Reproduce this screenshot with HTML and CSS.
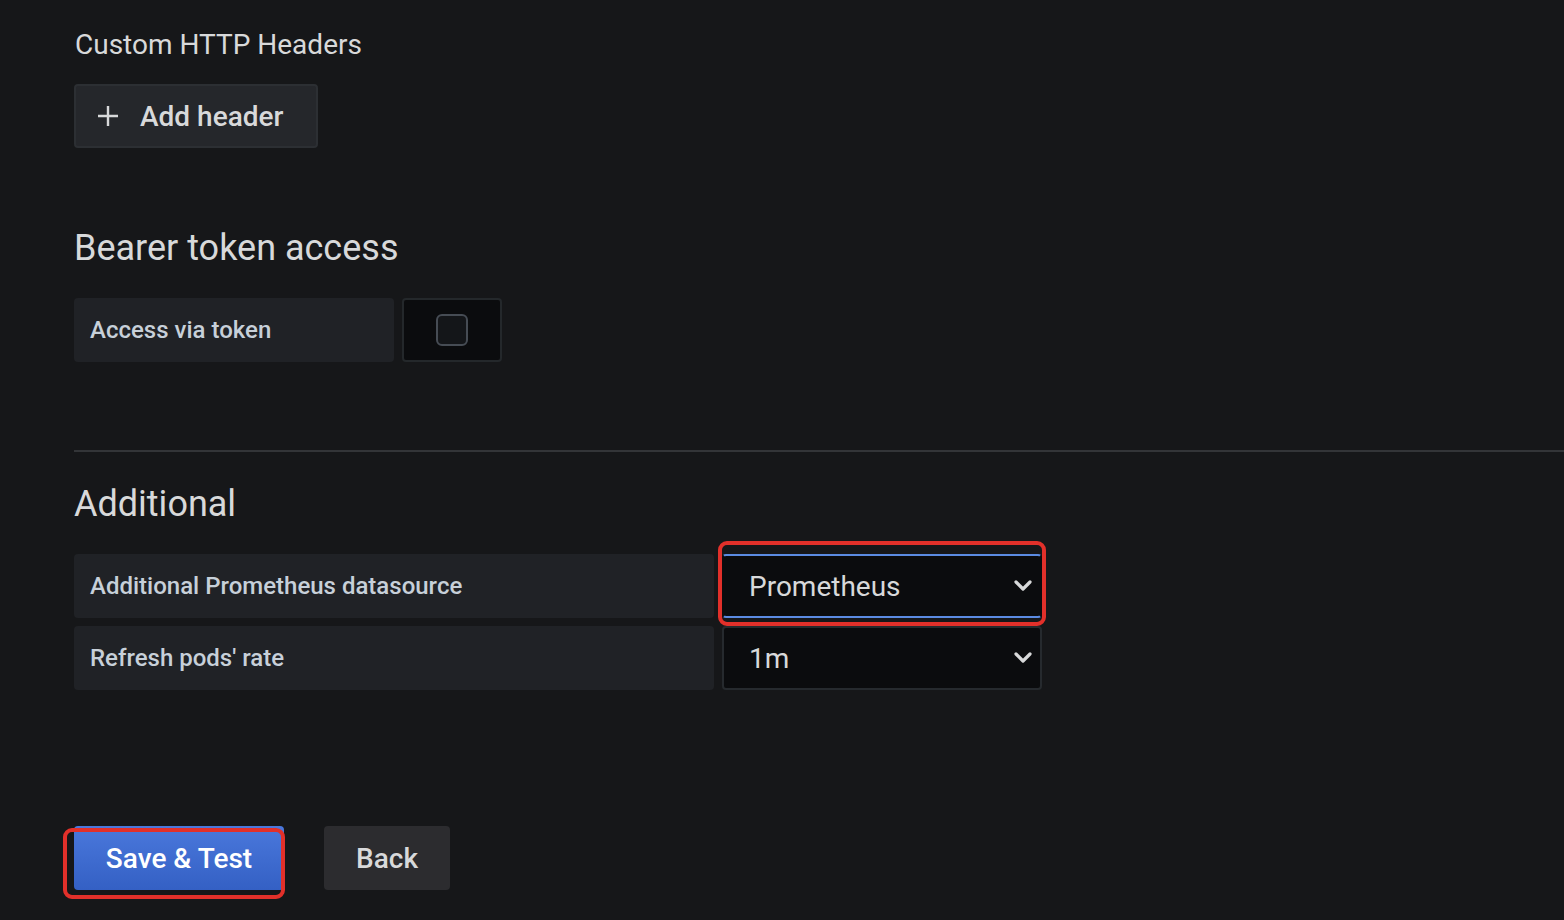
FILE: index.html
```html
<!DOCTYPE html>
<html>
<head>
<meta charset="utf-8">
<link rel="stylesheet" href="styles.css">
</head>
<body>
<div class="page">
  <div class="sub-title">Custom HTTP Headers</div>
  <button class="btn btn-secondary add-header">
    <svg class="plus" viewBox="0 0 22 22" width="22" height="22"><path d="M11 1v20M1 11h20" stroke="#d8d9da" stroke-width="2.4" fill="none"/></svg>
    <span>Add header</span>
  </button>

  <h3 class="section-title bearer">Bearer token access</h3>
  <div class="form-row">
    <div class="label label-short">Access via token</div>
    <div class="check-wrap"><span class="checkbox"></span></div>
  </div>

  <div class="divider"></div>

  <h3 class="section-title additional">Additional</h3>
  <div class="form-row">
    <div class="label label-long">Additional Prometheus datasource</div>
    <div class="select focused">
      <span>Prometheus</span>
      <svg class="chev" viewBox="0 0 18 12" width="18" height="12"><path d="M2 2l7 7 7-7" stroke="#d8d9da" stroke-width="3.2" fill="none" stroke-linecap="round" stroke-linejoin="round"/></svg>
      <div class="annot annot-select"></div>
    </div>
  </div>
  <div class="form-row">
    <div class="label label-long">Refresh pods' rate</div>
    <div class="select">
      <span>1m</span>
      <svg class="chev" viewBox="0 0 18 12" width="18" height="12"><path d="M2 2l7 7 7-7" stroke="#d8d9da" stroke-width="3.2" fill="none" stroke-linecap="round" stroke-linejoin="round"/></svg>
    </div>
  </div>

  <div class="actions">
    <button class="btn btn-primary save">Save &amp; Test<div class="annot annot-save"></div></button>
    <button class="btn btn-back">Back</button>
  </div>
</div>
</body>
</html>
```
FILE: styles.css
```css
html, body {
  margin: 0;
  padding: 0;
  background: #161719;
  height: 100%;
  overflow: hidden;
}
body {
  font-family: Roboto, "Liberation Sans", sans-serif;
  color: #d8d9da;
}
.page {
  padding: 27px 0 0 74px;
}
.sub-title {
  font-size: 28px;
  line-height: 36px;
  color: #d8d9da;
  margin: 0 0 21px 1px;
}
.btn {
  font-family: Roboto, "Liberation Sans", sans-serif;
  font-weight: 500;
  font-size: 28px;
  height: 64px;
  border-radius: 4px;
  border: none;
  padding: 0 32px;
  display: inline-flex;
  align-items: center;
  cursor: pointer;
  position: relative;
}
.btn-secondary {
  background: #25272b;
  border: 2px solid #2c2f33;
  color: #d8d9da;
}
.add-header {
  width: 244px;
  padding: 0 0 0 21px;
  gap: 21px;
}
.plus { flex: none; }
.section-title {
  font-size: 36px;
  font-weight: 400;
  line-height: 44px;
  margin: 0;
  color: #d8d9da;
}
.bearer {
  margin-top: 78px;
  margin-bottom: 28px;
}
.form-row {
  display: flex;
  gap: 8px;
  margin-bottom: 8px;
}
.label {
  height: 64px;
  background: #202226;
  border-radius: 4px;
  display: flex;
  align-items: center;
  padding: 0 16px;
  box-sizing: border-box;
  font-size: 24px;
  font-weight: 500;
  color: #c7d0d9;
}
.label-short { width: 320px; }
.label-long { width: 640px; }
.check-wrap {
  width: 100px;
  height: 64px;
  box-sizing: border-box;
  background: #0b0c0e;
  border: 2px solid #24282b;
  border-radius: 4px;
  display: flex;
  align-items: center;
  justify-content: center;
}
.checkbox {
  width: 32px;
  height: 32px;
  box-sizing: border-box;
  border: 2px solid #464c54;
  border-radius: 6px;
  background: #141619;
}
.divider {
  height: 2px;
  background: #333538;
  margin: 88px 0 30px;
}
.additional {
  margin-bottom: 28px;
}
.select {
  position: relative;
  width: 320px;
  height: 64px;
  box-sizing: border-box;
  background: #0b0c0e;
  border: 2px solid #262a2e;
  border-radius: 4px;
  display: flex;
  align-items: center;
  justify-content: space-between;
  padding: 0 8px 0 25px;
  font-size: 28px;
  color: #d8d9da;
}
.select.focused {
  border-color: #5b8be2;
  border-left-color: #0b0c0e;
  border-right-color: #0b0c0e;
}
.chev { flex: none; }
.annot {
  position: absolute;
  border: 4px solid #e2302a;
  border-radius: 9px;
  pointer-events: none;
}
.annot-select {
  left: -6px;
  top: -15px;
  width: 328px;
  height: 85px;
  box-sizing: border-box;
}
.actions {
  display: flex;
  gap: 40px;
  margin-top: 136px;
}
.btn-primary {
  background: linear-gradient(#4a78dc, #3460c4);
  color: #ffffff;
  width: 210px;
  justify-content: center;
  padding: 0;
}
.btn-back {
  background: #2c2c2f;
  color: #d8d9da;
  width: 126px;
  justify-content: center;
  padding: 0;
}
.annot-save {
  left: -11px;
  top: 2px;
  width: 222px;
  height: 71px;
  box-sizing: border-box;
}
```
